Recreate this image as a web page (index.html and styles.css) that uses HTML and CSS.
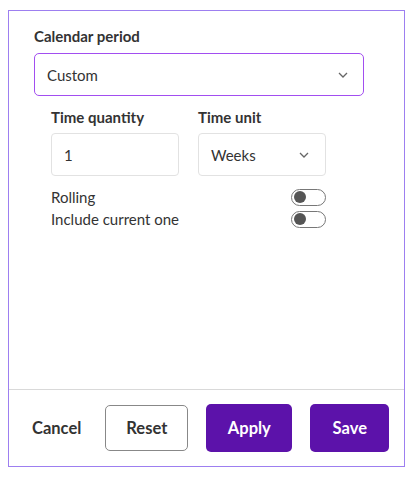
FILE: index.html
```html
<!DOCTYPE html>
<html>
<head>
<meta charset="utf-8">
<link rel="stylesheet" href="styles.css">
</head>
<body>
<div class="panel">
  <div class="content">
    <div class="label">Calendar period</div>
    <div class="select main-select">
      <span>Custom</span>
      <svg class="chev" width="12" height="8" viewBox="0 0 12 8"><path d="M2 2 L6 6 L10 2" fill="none" stroke="#666" stroke-width="1.3"/></svg>
    </div>
    <div class="sub">
      <div class="fields">
        <div class="field">
          <div class="label small">Time quantity</div>
          <div class="box">1</div>
        </div>
        <div class="field">
          <div class="label small">Time unit</div>
          <div class="box unit">
            <span>Weeks</span>
            <svg class="chev" width="12" height="8" viewBox="0 0 12 8"><path d="M2 2 L6 6 L10 2" fill="none" stroke="#666" stroke-width="1.3"/></svg>
          </div>
        </div>
      </div>
      <div class="toggle-row first">
        <span>Rolling</span>
        <span class="toggle"><span class="knob"></span></span>
      </div>
      <div class="toggle-row">
        <span>Include current one</span>
        <span class="toggle"><span class="knob"></span></span>
      </div>
    </div>
  </div>
  <div class="footer">
    <button class="btn link">Cancel</button>
    <button class="btn outline">Reset</button>
    <button class="btn primary apply">Apply</button>
    <button class="btn primary save">Save</button>
  </div>
</div>
</body>
</html>
```
FILE: styles.css
```css
* { box-sizing: border-box; }
body {
  margin: 0;
  padding: 10px 9px 0 8px;
  font-family: "Lato", "Noto Sans", sans-serif;
  color: #333;
  background: #fff;
}
.panel {
  width: 397px;
  height: 457px;
  border: 1.5px solid #9d7ff0;
  display: flex;
  flex-direction: column;
}
.content {
  flex: 1;
  padding: 16px 40px 0 25px;
}
.label {
  font-weight: 700;
  font-size: 15px;
  color: #333;
  line-height: 18px;
}
.select {
  margin-top: 8px;
  height: 43px;
  border: 1.5px solid #a24ef0;
  border-radius: 5px;
  display: flex;
  align-items: center;
  justify-content: space-between;
  padding: 0 14px 0 12px;
  font-size: 15px;
}
.sub {
  padding: 12px 0 0 17px;
}
.fields {
  display: flex;
  gap: 19px;
}
.field { width: 128px; }
.box {
  margin-top: 7px;
  height: 43px;
  border: 1px solid #e2e2e2;
  border-radius: 4px;
  display: flex;
  align-items: center;
  padding: 0 12px;
  font-size: 15px;
}
.box.unit { justify-content: space-between; padding-right: 15px; }
.toggle-row {
  display: flex;
  justify-content: space-between;
  align-items: center;
  width: 275px;
  height: 22px;
  font-size: 15px;
  color: #333;
}
.toggle-row.first { margin-top: 10px; }
.toggle {
  width: 35px;
  height: 17px;
  border: 1.5px solid #777;
  border-radius: 9px;
  display: flex;
  align-items: center;
  padding-left: 2px;
}
.knob {
  width: 12px;
  height: 12px;
  border-radius: 50%;
  background: #555;
}
.footer {
  border-top: 1px solid #d9d9d9;
  height: 77px;
  display: flex;
  align-items: center;
  padding: 0 13px 0 23px;
  gap: 18px;
}
.btn {
  font-family: inherit;
  font-weight: 700;
  font-size: 16.5px;
  border-radius: 5px;
  height: 48px;
  cursor: pointer;
}
.link {
  background: none;
  border: none;
  color: #333;
  padding: 0;
  margin-right: 6px;
}
.outline {
  background: #fff;
  border: 1.5px solid #888;
  color: #333;
  width: 83px;
  height: 46px;
}
.primary {
  background: #5c12aa;
  border: none;
  color: #fff;
}
.apply { width: 86px; }
.save { width: 79px; }
```
